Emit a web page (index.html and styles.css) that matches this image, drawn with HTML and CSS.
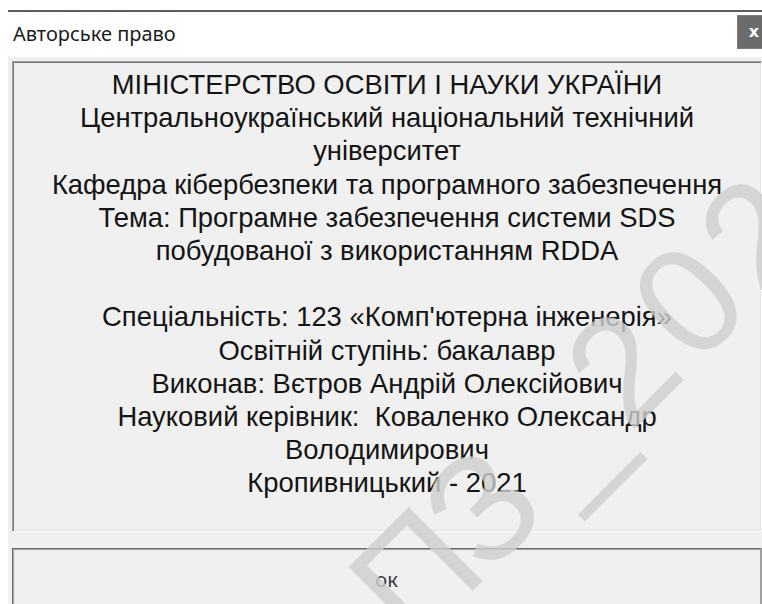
FILE: index.html
```html
<!DOCTYPE html>
<html lang="uk">
<head>
<meta charset="utf-8">
<title>Авторське право</title>
<link rel="stylesheet" href="styles.css">
</head>
<body>
<div class="window">
  <div class="titlebar">
    <span class="title">Авторське право</span>
    <button class="close" type="button">x</button>
  </div>
  <div class="client">
    <div class="info">
      <p>МІНІСТЕРСТВО ОСВІТИ І НАУКИ УКРАЇНИ</p>
      <p>Центральноукраїнський національний технічний</p>
      <p>університет</p>
      <p>Кафедра кібербезпеки та програмного забезпечення</p>
      <p>Тема: Програмне забезпечення системи SDS</p>
      <p>побудованої з використанням RDDA</p>
      <p class="blank"></p>
      <p>Спеціальність: 123 «Комп'ютерна інженерія»</p>
      <p>Освітній ступінь: бакалавр</p>
      <p>Виконав: Вєтров Андрій Олексійович</p>
      <p class="keep-spaces">Науковий керівник:  Коваленко Олександр</p>
      <p>Володимирович</p>
      <p>Кропивницький - 2021</p>
    </div>
    <button class="ok" type="button">ок</button>
  </div>
</div>
<svg class="watermark" width="762" height="604" viewBox="0 0 762 604" aria-hidden="true">
  <g transform="rotate(-45)">
    <text x="-167 -64 47 138 232 326 420" y="752">ПЗ_2021</text>
  </g>
</svg>
</body>
</html>
```
FILE: styles.css
```css
html, body {
  margin: 0;
  height: 100%;
  background: #ffffff;
  overflow: hidden;
}

body {
  position: relative;
}

/* dialog frame */
.window {
  margin: 10px 0 0 8px;
  width: 770px;
  border-top: 2px solid #5c5c5c;
}

.titlebar {
  height: 45px;
  background: #ffffff;
  display: flex;
  align-items: flex-start;
  justify-content: space-between;
}

.title {
  margin: 10px 0 0 5px;
  font-family: "Noto Sans", "Open Sans", sans-serif;
  font-size: 20px;
  line-height: 24px;
  color: #1c1c1c;
}

.close {
  margin: 3px 7px 0 0;
  width: 34px;
  height: 34px;
  padding: 0;
  border: 1px solid #7c7c7c;
  background: #6b6b6b;
  color: #ffffff;
  font-family: "DejaVu Sans", sans-serif;
  font-weight: bold;
  font-size: 16px;
  line-height: 28px;
}

.client {
  background: #f0f0f0;
  padding: 4px 0 0 4px;
  height: 620px;
}

/* sunken label with the credits */
.info {
  box-sizing: border-box;
  width: 750px;
  height: 471px;
  padding-top: 6px;
  border-top: 1px solid #a0a0a0;
  border-left: 1px solid #a0a0a0;
  border-bottom: 1px solid #ffffff;
  border-right: 1px solid #ffffff;
  box-shadow: inset 1px 1px 0 #7a7a7a, inset -1px -1px 0 #e3e3e3;
  text-align: center;
  font-family: "Liberation Sans", Arial, sans-serif;
  font-size: 27.4px;
  line-height: 33.2px;
  color: #141414;
}

.info p {
  margin: 0;
  height: 33.2px;
  white-space: nowrap;
}

.info .keep-spaces {
  white-space: pre;
}

.ok {
  display: block;
  margin-top: 16px;
  box-sizing: border-box;
  width: 750px;
  height: 62px;
  padding: 0;
  background: #f0f0f0;
  border-top: 1px solid #6a6a6a;
  border-left: 1px solid #6a6a6a;
  border-right: 2px solid #a0a0a0;
  border-bottom: 1px solid #a0a0a0;
  box-shadow: inset 1px 1px 0 #a8a8a8, inset 2px 2px 0 #e6e6e6;
  font-family: "Noto Sans", "Open Sans", sans-serif;
  font-size: 20px;
  color: #3a3a3a;
}

/* light diagonal stamp over the dialog */
.watermark {
  position: absolute;
  left: 0;
  top: 0;
  pointer-events: none;
}

.watermark text {
  font-family: "Liberation Sans", Arial, sans-serif;
  font-size: 152px;
  fill: #cfcfcf;
  opacity: 0.8;
}
```
